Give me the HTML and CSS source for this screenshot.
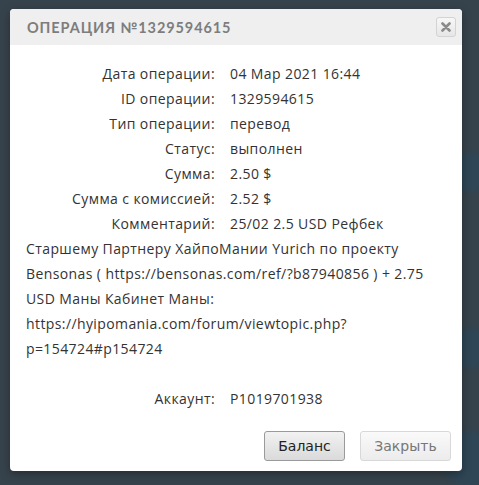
FILE: index.html
```html
<!DOCTYPE html>
<html lang="ru">
<head>
    <meta charset="UTF-8">
    <title>Операция №1329594615</title>
    <link rel="stylesheet" href="styles.css">
</head>
<body>
    <div class="backdrop">
        <span class="blob blob-1"></span>
        <span class="blob blob-2"></span>
        <span class="blob blob-3"></span>
        <div class="dialog">
            <div class="dialog-header">
                <span class="dialog-title">Операция №1329594615</span>
                <button class="close-btn" title="Закрыть">
                    <svg width="10" height="10" viewBox="0 0 10 10">
                        <path d="M1.5 1.5 L8.5 8.5 M8.5 1.5 L1.5 8.5" stroke="#8a8a8a" stroke-width="2.6" stroke-linecap="round"/>
                    </svg>
                </button>
            </div>
            <div class="dialog-body">
                <div class="details">
                    <div class="label">Дата операции:</div>
                    <div class="value">04 Мар 2021 16:44</div>
                    <div class="label">ID операции:</div>
                    <div class="value">1329594615</div>
                    <div class="label">Тип операции:</div>
                    <div class="value">перевод</div>
                    <div class="label">Статус:</div>
                    <div class="value">выполнен</div>
                    <div class="label">Сумма:</div>
                    <div class="value">2.50 $</div>
                    <div class="label">Сумма с комиссией:</div>
                    <div class="value">2.52 $</div>
                    <div class="label">Комментарий:</div>
                    <div class="value">25/02 2.5 USD Рефбек</div>
                </div>
                <p class="comment">
                    Старшему Партнеру ХайпоМании Yurich по проекту<br>
                    Bensonas ( https://bensonas.com/ref/?b87940856 ) + 2.75<br>
                    USD Маны Кабинет Маны:<br>
                    https://hyipomania.com/forum/viewtopic.php?<br>
                    p=154724#p154724
                </p>
                <div class="details account">
                    <div class="label">Аккаунт:</div>
                    <div class="value">P1019701938</div>
                </div>
            </div>
            <div class="dialog-footer">
                <button class="btn btn-primary">Баланс</button>
                <button class="btn btn-muted">Закрыть</button>
            </div>
        </div>
    </div>
</body>
</html>
```

FILE: styles.css
```css
* {
    margin: 0;
    padding: 0;
    box-sizing: border-box;
}

body {
    background: #37434c;
    font-family: 'Open Sans', 'Lato', sans-serif;
    color: #333;
}

.backdrop {
    position: relative;
    width: 479px;
    height: 485px;
    overflow: hidden;
    padding: 9px 0 0 10px;
}

.blob {
    position: absolute;
    width: 40px;
    height: 40px;
    border-radius: 50%;
    background: #2f4656;
    filter: blur(2px);
}

.blob-1 { left: 452px; top: 152px; }
.blob-2 { left: 452px; top: 328px; }
.blob-3 { left: 440px; top: 430px; width: 56px; height: 56px; }

.dialog {
    position: relative;
    width: 452px;
    background: #fff;
    border-radius: 4px;
    box-shadow: 0 3px 10px rgba(0, 0, 0, 0.35);
    overflow: hidden;
}

.dialog-header {
    height: 36px;
    background: #efefef;
    display: flex;
    align-items: center;
    justify-content: space-between;
    padding: 0 6px 0 17px;
}

.dialog-title {
    font-family: 'Lato', sans-serif;
    font-weight: 700;
    font-size: 14.5px;
    letter-spacing: 0.9px;
    text-transform: uppercase;
    color: #7d7d7d;
}

.close-btn {
    width: 20px;
    height: 20px;
    border: 1px solid #d3d3d3;
    border-radius: 3px;
    background: linear-gradient(#f7f7f7, #e6e6e6);
    display: flex;
    align-items: center;
    justify-content: center;
}

.dialog-body {
    padding: 16px 16px 0 16px;
    font-size: 14px;
    line-height: 25px;
    letter-spacing: 0.4px;
}

.details {
    display: grid;
    grid-template-columns: 189px 1fr;
    column-gap: 15px;
}

.label {
    text-align: right;
}

.comment {
    margin-bottom: 25px;
}

.dialog-footer {
    display: flex;
    justify-content: flex-end;
    gap: 15px;
    padding: 20px 11px 10px 0;
}

.btn {
    height: 30px;
    border-radius: 3px;
    font-family: 'DejaVu Sans', Verdana, sans-serif;
    font-size: 14px;
    cursor: pointer;
}

.btn-primary {
    width: 81px;
    border: 1px solid #9a9a9a;
    background: linear-gradient(#f2f2f2, #dadada);
    color: #222;
}

.btn-muted {
    width: 91px;
    border: 1px solid #d8d8d8;
    background: linear-gradient(#fafafa, #ececec);
    color: #777;
}
```
